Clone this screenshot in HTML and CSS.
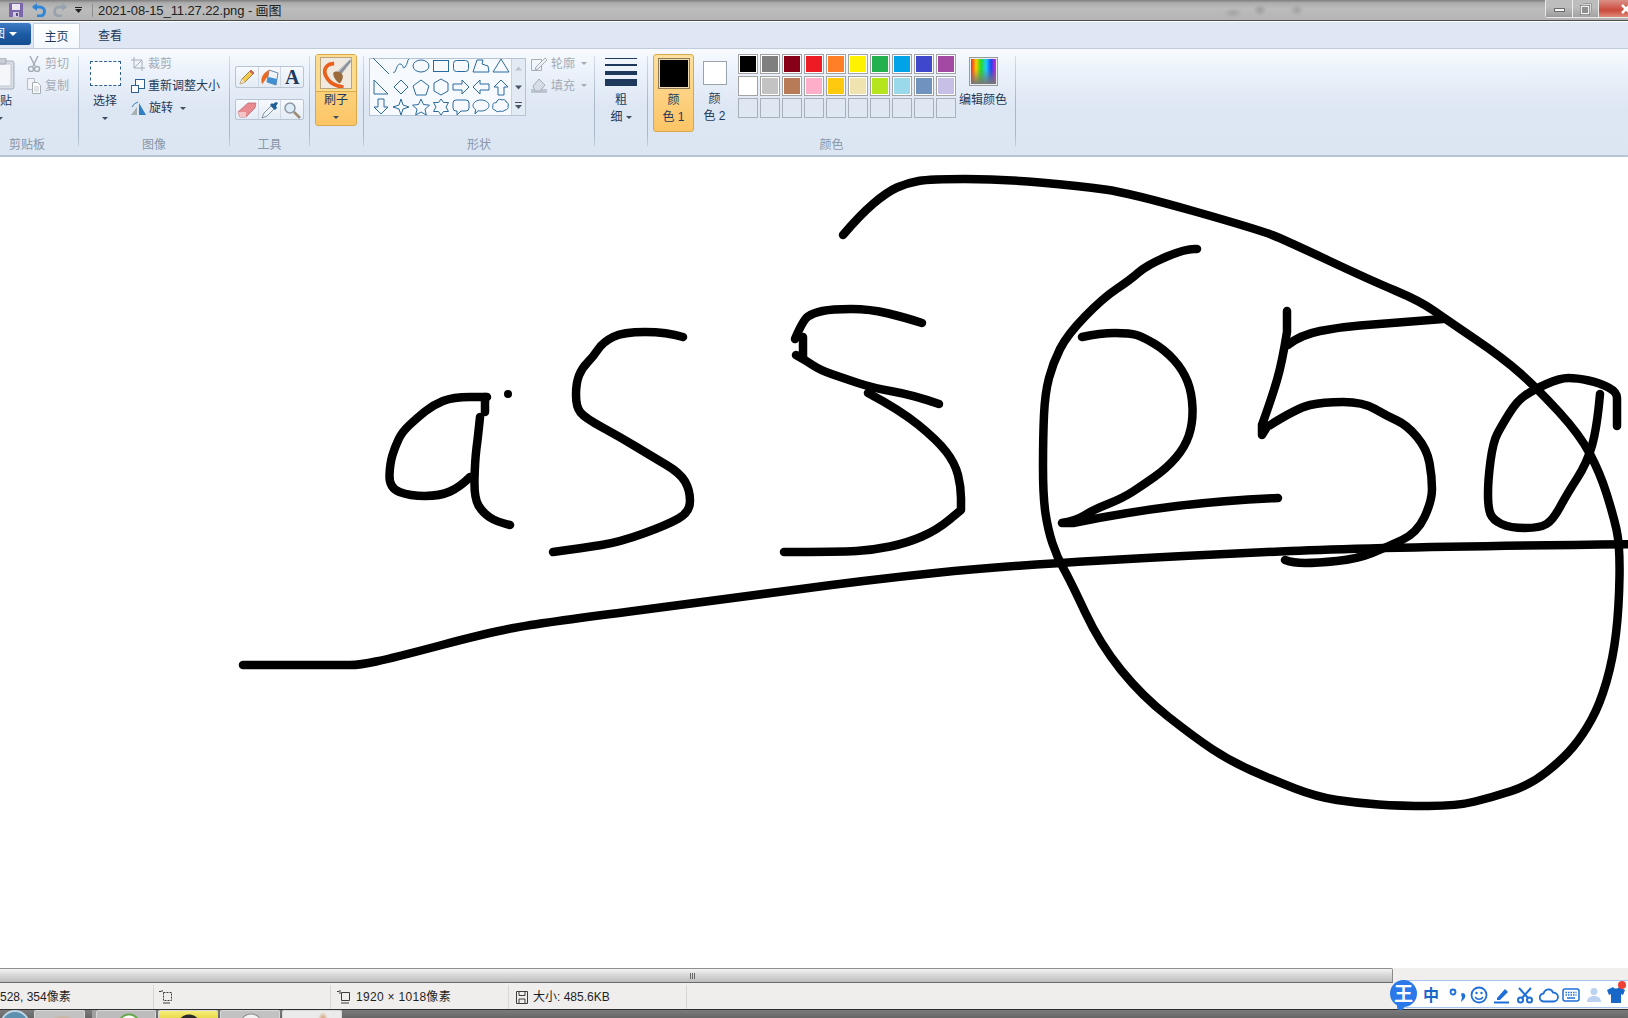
FILE: index.html
```html
<!DOCTYPE html>
<html lang="zh-CN">
<head>
<meta charset="utf-8">
<title>2021-08-15_11.27.22.png - 画图</title>
<link rel="stylesheet" href="styles.css">
</head>
<body>
<div class="app">
  <header class="titlebar">
    <svg class="qat save" viewBox="0 0 14 14"><path d="M0 0h14v14H0z" fill="#7a66a8"/><path d="M3 1h8v6H3z" fill="#e9e6f2"/><path d="M4 9h6v5H4z" fill="#cfc9e0"/><path d="M7 10h2v3H7z" fill="#5b4a8a"/></svg>
    <svg class="qat undo" viewBox="0 0 14 14"><path d="M1 4h7a4.500 4.500 0 0 1 0 9H5" fill="none" stroke="#2f86d6" stroke-width="3"/><path d="M5 0v8L0 4z" fill="#2f86d6"/></svg>
    <svg class="qat redo" viewBox="0 0 14 14"><path d="M13 4H6a4.500 4.500 0 0 0 0 9h3" fill="none" stroke="#9aa3ad" stroke-width="3"/><path d="M9 0v8l5-4z" fill="#9aa3ad"/></svg>
    <svg class="qat-drop" viewBox="0 0 7 6"><path d="M0 0h7v1H0zM0 2h7L3.500 6z" fill="#222"/></svg>
    <span class="title-sep"></span>
    <span class="title-text">2021-08-15_11.27.22.png - 画图</span>
    <div class="caption">
      <span class="cap cap-min"><i></i></span>
      <span class="cap cap-max"><svg width="12" height="12" viewBox="0 0 12 12"><path d="M3 .5h8.500V9" fill="none" stroke="#f1f1f1" stroke-width="2"/><path d="M3 .5h8.500V9" fill="none" stroke="#5f5f5f" stroke-width=".6"/><rect x="1" y="3" width="8" height="8" fill="#8f8f8f" stroke="#f1f1f1" stroke-width="2"/><rect x=".3" y="2.300" width="9.400" height="9.400" fill="none" stroke="#5f5f5f" stroke-width=".6"/></svg></span>
      <span class="cap cap-close"><svg viewBox="0 0 10 10"><path d="M1 1l8 8M9 1l-8 8" stroke="#fff" stroke-width="2.500"/></svg></span>
    </div>
  </header>

  <nav class="tabs">
    <div class="filebtn"><span>画图</span><b></b></div>
    <div class="tab active">主页</div>
    <div class="tab">查看</div>
  </nav>

  <section class="ribbon">
    <div class="group g-clip">
      <div class="body">
        <div class="big paste">
          <div class="slot"><svg width="30" height="32" viewBox="0 0 30 32"><rect x="1" y="3" width="28" height="28" rx="2" fill="#d9dee6" stroke="#a3adba"/><rect x="4" y="6" width="22" height="22" fill="#f4f6f9" stroke="#c4cad3"/><rect x="9" y="0" width="12" height="6" rx="1" fill="#c9ced6" stroke="#9fa8b3"/></svg></div>
          <span class="lbl">粘贴</span>
          <i class="caret"></i>
        </div>
        <div class="small-col">
          <div class="row dis"><svg width="14" height="16" viewBox="0 0 14 16"><path d="M3 0l5 10M11 0L6 10" stroke="#a8aeb6" stroke-width="1.500" fill="none"/><circle cx="4" cy="13" r="2.500" fill="none" stroke="#a8aeb6" stroke-width="1.500"/><circle cx="10" cy="13" r="2.500" fill="none" stroke="#a8aeb6" stroke-width="1.500"/></svg><span>剪切</span></div>
          <div class="row dis"><svg width="14" height="16" viewBox="0 0 14 16"><path d="M.5.500h7v11h-7z" fill="#f2f4f7" stroke="#b6bcc4"/><path d="M5.500 4.500h5l3 3v8h-8z" fill="#fff" stroke="#a8aeb6"/><path d="M7 9h5M7 11h5M7 13h5" stroke="#c4c9d0"/></svg><span>复制</span></div>
        </div>
      </div>
      <div class="glabel">剪贴板</div>
    </div>
    <span class="sep"></span>

    <div class="group g-image">
      <div class="body">
        <div class="big select">
          <div class="slot"><span class="dashed"></span></div>
          <span class="lbl">选择</span>
          <i class="caret"></i>
        </div>
        <div class="small-col">
          <div class="row dis"><svg width="14" height="14" viewBox="0 0 14 14"><path d="M3 0v11h11M0 3h11v11" fill="none" stroke="#a8aeb6"/><path d="M3 11l8-8" stroke="#a8aeb6"/></svg><span>裁剪</span></div>
          <div class="row"><svg width="14" height="14" viewBox="0 0 14 14"><rect x="4.500" y=".5" width="9" height="9" fill="#fff" stroke="#2c5f92"/><rect x=".5" y="6.500" width="7" height="7" fill="#fff" stroke="#2c5f92"/></svg><span>重新调整大小</span></div>
          <div class="row"><svg width="15" height="14" viewBox="0 0 15 14"><path d="M0 14L6 6v8z" fill="#a9aeb4"/><path d="M8 2l7 12H8z" fill="#2f7fc2"/><path d="M1 6q2-4 6-5" fill="none" stroke="#2f7fc2"/></svg><span>旋转</span><i class="caret caret-row"></i></div>
        </div>
      </div>
      <div class="glabel">图像</div>
    </div>
    <span class="sep"></span>

    <div class="group g-tools">
      <div class="body tools-body">
        <div class="toolbox">
          <span class="tool"><svg width="18" height="18" viewBox="0 0 18 18"><path d="M2 16l2-5L13 2l3 3-9 9z" fill="#f2c94f" stroke="#8b6d2a" stroke-width=".8"/><path d="M13 2l3 3-1.500 1.500-3-3z" fill="#d9625b"/><path d="M2 16l2-5 3 3z" fill="#f1dfc0"/></svg></span>
          <span class="tool"><svg width="20" height="18" viewBox="0 0 20 18"><path d="M9 2l9 3-2 12-9-3z" fill="#eef3f8" stroke="#6f8cab"/><path d="M8.500 9l8.500 2-1 6-9-3z" fill="#3f8fd2"/><path d="M9 2C3 5 0 10 2 16c2-1 3-5 6-7z" fill="#ea6a24"/></svg></span>
          <span class="tool"><span class="glyph-a">A</span></span>
        </div>
        <div class="toolbox second">
          <span class="tool"><svg width="20" height="16" viewBox="0 0 20 16"><path d="M1 10L11 1h8l-1 5-9 9H3z" fill="#ea8b92" stroke="#b56169" stroke-width=".7"/><path d="M1 10h8v5H3z" fill="#f3c3c6"/></svg></span>
          <span class="tool"><svg width="18" height="18" viewBox="0 0 18 18"><path d="M1 17l2-5 7-7 3 3-7 7z" fill="#eef3f8" stroke="#6a7d90" stroke-width=".8"/><path d="M9 4l5 5 2-2-1-2 2-3-2-1-3 2-1-1z" fill="#1f5f98"/></svg></span>
          <span class="tool"><svg width="18" height="18" viewBox="0 0 18 18"><circle cx="7" cy="7" r="5" fill="#dcecf7" stroke="#8d97a3" stroke-width="1.500"/><path d="M11 11l6 6" stroke="#9c8a72" stroke-width="2.500"/></svg></span>
        </div>
      </div>
      <div class="glabel">工具</div>
    </div>
    <span class="sep"></span>

    <div class="group g-brush">
      <div class="body">
        <div class="brushbtn">
          <div class="brushicon"><svg width="32" height="32" viewBox="0 0 32 32"><rect width="32" height="32" fill="#efe9df"/><path d="M14 6C6 6 2 12 5 19s10 11 19 12" fill="none" stroke="#e8601c" stroke-width="4"/><path d="M31 1l1 3-11 14-4-3z" fill="#8b929b"/><path d="M31 1L18 15" stroke="#dfe2e6"/><path d="M13 16c3-3 8-1 10 2 1 3-1 7-3 9-3-1-7-6-7-11z" fill="#9b6a3b"/></svg></div>
          <span class="lbl">刷子</span>
          <i class="caret"></i>
        </div>
      </div>
      <div class="glabel">&nbsp;</div>
    </div>
    <span class="sep"></span>

    <div class="group g-shapes">
      <div class="body">
        <div class="gallery">
          <div class="shapes">
            <svg viewBox="0 0 18 18"><path d="M1 1l16 16"/></svg>
            <svg viewBox="0 0 18 18"><path d="M1 15c3 3 3-8 7-8s2 6 5 3 2-7 4-8"/></svg>
            <svg viewBox="0 0 18 18"><ellipse cx="9" cy="9" rx="8" ry="6"/></svg>
            <svg viewBox="0 0 18 18"><rect x="1.500" y="3.500" width="15" height="11"/></svg>
            <svg viewBox="0 0 18 18"><rect x="1.500" y="3.500" width="15" height="11" rx="3"/></svg>
            <svg viewBox="0 0 18 18"><path d="M1 15L5 3h6l-1 4 6 2 1 6z"/></svg>
            <svg viewBox="0 0 18 18"><path d="M9 2l8 13H1z"/></svg>
            <svg viewBox="0 0 18 18"><path d="M2 2v14h14z"/></svg>
            <svg viewBox="0 0 18 18"><path d="M9 2l7 7-7 7-7-7z"/></svg>
            <svg viewBox="0 0 18 18"><path d="M9 2l8 6-3 9H4L1 8z"/></svg>
            <svg viewBox="0 0 18 18"><path d="M9 1l7 4v8l-7 4-7-4V5z"/></svg>
            <svg viewBox="0 0 18 18"><path d="M1 6h9V2l7 7-7 7v-4H1z"/></svg>
            <svg viewBox="0 0 18 18"><path d="M17 6H8V2L1 9l7 7v-4h9z"/></svg>
            <svg viewBox="0 0 18 18"><path d="M6 17V9H2l7-7 7 7h-4v8z"/></svg>
            <svg viewBox="0 0 18 18"><path d="M6 1v8H2l7 7 7-7h-4V1z"/></svg>
            <svg viewBox="0 0 18 18"><path d="M9 1l2 6 6 2-6 2-2 6-2-6-6-2 6-2z"/></svg>
            <svg viewBox="0 0 18 18"><path d="M9 1l2.500 5.500 6 .7-4.500 4 1.300 5.800L9 14l-5.300 3L5 11.200l-4.500-4 6-.7z"/></svg>
            <svg viewBox="0 0 18 18"><path d="M9 1l2.500 3.500h5L14 9l2.500 4.500h-5L9 17l-2.500-3.500h-5L4 9 1.500 4.500h5z"/></svg>
            <svg viewBox="0 0 18 18"><path d="M4 2h10a3 3 0 0 1 3 3v5a3 3 0 0 1-3 3H9l-4 4v-4H4a3 3 0 0 1-3-3V5a3 3 0 0 1 3-3z"/></svg>
            <svg viewBox="0 0 18 18"><path d="M9 2c4.500 0 8 2.500 8 5.500S13.500 13 9 13c-1 0-2 0-3-.3L3 16l.6-4.500C2 10.500 1 9 1 7.500 1 4.500 4.500 2 9 2z"/></svg>
            <svg viewBox="0 0 18 18"><path d="M5 3c1-2 4-2 5-1 2-1 4 0 4 2 2 0 3 3 2 4 1 2-1 4-3 4-1 1-3 2-5 1-1 1-4 1-5-1-2 0-3-2-2-4-1-2 1-4 3-3z"/></svg>
          </div>
          <div class="gal-scroll">
            <span class="gs"><svg viewBox="0 0 7 4"><path d="M0 4l3.500-4L7 4z" fill="#bcc4ce"/></svg></span>
            <span class="gs"><svg viewBox="0 0 7 4"><path d="M0 0l3.500 4L7 0z" fill="#4a5563"/></svg></span>
            <span class="gs"><svg viewBox="0 0 7 7"><path d="M0 0h7v1H0zM0 3h7L3.500 7z" fill="#4a5563"/></svg></span>
          </div>
        </div>
        <div class="small-col outline-col">
          <div class="row dis"><svg width="16" height="14" viewBox="0 0 16 14"><path d="M.5 2.500h10v11H.5z" fill="none" stroke="#a8aeb6"/><path d="M5 10l9-9 2 2-9 9-3 1z" fill="#eef1f4" stroke="#a8aeb6"/></svg><span>轮廓</span><i class="caret caret-row dis-caret"></i></div>
          <div class="row dis"><svg width="16" height="15" viewBox="0 0 16 15"><path d="M0 11h16v4H0z" fill="#bcc6d2"/><path d="M8 1l6 6-5 6H4L2 8z" fill="#d6dde6" stroke="#a8aeb6"/></svg><span>填充</span><i class="caret caret-row dis-caret"></i></div>
        </div>
      </div>
      <div class="glabel">形状</div>
    </div>
    <span class="sep"></span>

    <div class="group g-size">
      <div class="body">
        <div class="big sizebtn">
          <div class="sizes"><i class="s1"></i><i class="s2"></i><i class="s3"></i><i class="s4"></i></div>
          <span class="lbl">粗</span>
          <span class="lbl">细<i class="caret caret-row"></i></span>
        </div>
      </div>
      <div class="glabel">&nbsp;</div>
    </div>
    <span class="sep"></span>

    <div class="group g-colors">
      <div class="body">
        <div class="colorbtn c1">
          <span class="cswatch black"></span>
          <span class="lbl">颜</span>
          <span class="lbl">色 1</span>
        </div>
        <div class="colorbtn c2">
          <span class="cswatch white"></span>
          <span class="lbl">颜</span>
          <span class="lbl">色 2</span>
        </div>
        <div class="palette">
          <i class="c-000"></i><i class="c-7f7"></i><i class="c-880"></i><i class="c-ed1"></i><i class="c-ff7"></i><i class="c-fff2"></i><i class="c-22b"></i><i class="c-00a"></i><i class="c-3f4"></i><i class="c-a34"></i>
          <i class="c-fff"></i><i class="c-c3c"></i><i class="c-b97"></i><i class="c-ffa"></i><i class="c-ffc"></i><i class="c-efe"></i><i class="c-b5e"></i><i class="c-99d"></i><i class="c-709"></i><i class="c-c8b"></i>
          <i></i><i></i><i></i><i></i><i></i><i></i><i></i><i></i><i></i><i></i>
        </div>
        <div class="big editcolor">
          <div class="slot"><span class="rainbow"></span></div>
          <span class="lbl">编辑颜色</span>
        </div>
      </div>
      <div class="glabel">颜色</div>
    </div>
    <span class="sep"></span>
  </section>

  <main class="canvas">
    <svg class="drawing" viewBox="0 157 1628 811" width="1628" height="811">
      <g class="ink">
        <path d="M487,397 L470,397 Q453,397 443,401 Q433,405 425,411.500 Q417,418 409.500,425 Q402,432 398.500,439.500 Q395,447 392.500,455 Q390,463 389.500,475 Q389,488 399.500,492 Q410,496 425,496 Q440,496 450,491.500 Q460,487 470,477"/>
        <path d="M485,397 L485,412"/>
        <path d="M480,417 Q478,437 476.500,448 Q475,460 474.500,479 Q474,498 478.500,505.500 Q483,513 490,517.500 Q497,522 510,525"/>
        <path d="M683,337 Q667,332 645,332 Q623,332 613,337 Q603,342 598,349.500 Q593,357 587.500,362.500 Q582,368 579,375.500 Q576,383 576,395 Q576,407 580.500,412.500 Q585,418 602.500,427.500 Q620,437 636.500,447 Q653,457 666.500,465 Q680,473 685,481.500 Q690,490 690,501 Q690,512 678.500,518.500 Q667,525 643.500,533.500 Q620,542 601.500,545 Q583,548 553,552"/>
        <path d="M243,665 L350,665 Q360,665 376,661.500 Q393,658 440,645.500 Q487,633 513.500,628 Q540,623 630,611.500 Q720,600 793.500,590 Q867,580 935,573 Q1003,566 1101.500,560.500 Q1200,555 1290.500,551 Q1381,547 1640,544"/>
        <path d="M843,235 Q860,215 873.500,203.500 Q887,192 897,187.500 Q907,183 918.500,181 Q930,179 965,179 Q1000,179 1040,182.500 Q1080,186 1105,189.500 Q1130,193 1195,211.500 Q1260,230 1273.500,235.500 Q1287,241 1328.500,260.500 Q1370,280 1395,290.500 Q1420,301 1433.500,310.500 Q1447,320 1475,339 Q1503,358 1520.500,373.500 Q1538,389 1559,412 Q1580,435 1590,454 Q1600,473 1606.500,493.500 Q1613,514 1616.500,529.500 Q1620,545 1619.500,576.500 Q1619,608 1616,633.500 Q1613,659 1606.500,681.500 Q1600,704 1591.500,719.500 Q1583,735 1573,747 Q1563,759 1546.500,772 Q1530,785 1511.500,791 Q1493,797 1475,801.500 Q1457,806 1428.500,806 Q1400,806 1378.500,804.500 Q1357,803 1337,800 Q1317,797 1295,788.500 Q1273,780 1251.500,770.500 Q1230,761 1212,749 Q1194,737 1168,716.500 Q1142,696 1121,670 Q1100,644 1085,612 Q1070,580 1063.500,568.500 Q1057,557 1052.500,543.500 Q1048,530 1045.500,513.500 Q1043,497 1043,467 Q1043,437 1044,415 Q1045,393 1049,378 Q1053,363 1060,349 Q1067,335 1085,316.500 Q1103,298 1116.500,289 Q1130,280 1138.500,272.500 Q1147,265 1167,256.500 Q1187,248 1197,249"/>
        <path d="M1082,337 Q1100,333 1115,333 Q1130,333 1136.500,335 Q1143,337 1154,343.500 Q1165,350 1174,360 Q1183,370 1187.500,381.500 Q1192,393 1192.500,408 Q1193,423 1189,435 Q1185,447 1176,457.500 Q1167,468 1155,476.500 Q1143,485 1133,491.500 Q1123,498 1108,504 Q1093,510 1085,515 Q1077,520 1062,523 L1073,523 Q1127,512 1177,506 Q1227,500 1278,498"/>
        <path d="M922,323 Q907,318 888.500,313.500 Q870,309 851,309 Q832,309 822.500,311 Q813,313 808,316.500 Q803,320 795,339"/>
        <path d="M803,337 L803,357"/>
        <path d="M796,355 Q805,360 812.500,365 Q820,370 831.500,374 Q843,378 858,383 Q873,388 893,391.500 Q913,395 939,404"/>
        <path d="M868,393 Q900,410 918.500,425 Q937,440 946,451.500 Q955,463 958,475 Q961,487 961,498 L961,510 L949,520 Q937,530 922,536.500 Q907,543 890,546.500 Q873,550 856.500,551 Q840,552 784,552"/>
        <path d="M1287,311 L1287,332 Q1282,363 1277,380 Q1272,397 1262,425 L1262,435 L1267,427 Q1297,408 1310,405 Q1323,402 1343,402 Q1363,402 1375,409 Q1387,416 1397,420.500 Q1407,425 1417,437 Q1427,449 1429.500,463 Q1432,477 1432,489 Q1432,501 1424.500,517 Q1417,533 1402,540 Q1387,547 1372,553 Q1357,559 1337,561 Q1317,563 1305,563 Q1293,563 1285,560"/>
        <path d="M1288,345 Q1300,335 1320,331 Q1340,327 1360,325.500 Q1380,324 1443,319"/>
        <path d="M1617,426 L1617,398 Q1617,392 1608.500,387.500 Q1600,383 1588.500,380.500 Q1577,378 1568.500,378 Q1560,378 1546.500,384 Q1533,390 1525,395.500 Q1517,401 1509.500,413 Q1502,425 1497.500,433.500 Q1493,442 1490.500,461 Q1488,480 1488,494 Q1488,508 1490.500,514 Q1493,520 1501.500,524 Q1510,528 1525,528 Q1540,528 1546.500,524 Q1553,520 1560,507 Q1567,494 1577,478.500 Q1587,463 1592,445.500 Q1597,428 1600,394"/>
      </g>
      <circle cx="508" cy="394" r="4"/>
    </svg>
  </main>

  <div class="hscroll">
    <div class="track"><span class="grip"></span></div>
    <div class="track-rest"></div>
  </div>

  <footer class="status">
    <div class="cell c-a"><span>528, 354像素</span></div>
    <div class="cell c-b"><svg width="13" height="14" viewBox="0 0 13 14"><path d="M3 0v3M0 1.500h2M4.500 2.500h8v8h-8z" fill="none" stroke="#3c3c3c" stroke-dasharray="2 1"/><path d="M4 13h7" stroke="#3c3c3c"/></svg></div>
    <div class="cell c-c"><svg width="13" height="14" viewBox="0 0 13 14"><path d="M3 0v4M0 1.500h2M4.500 2.500h8v8h-8z" fill="none" stroke="#3c3c3c"/><path d="M4 13h8" stroke="#3c3c3c"/></svg><span>1920 × 1018像素</span></div>
    <div class="cell c-d"><svg width="12" height="13" viewBox="0 0 12 13"><path d="M.5.500h11v12H.5zM3 .5v4h6v-4M3 12.500V8h6v4.500" fill="none" stroke="#3c3c3c"/></svg><span>大小: 485.6KB</span></div>
    <div class="cell c-e"></div>
  </footer>

  <div class="taskbar">
    <span class="orb"></span>
    <span class="tile t1"></span>
    <span class="tgrip"></span>
    <span class="tile t2"></span>
    <span class="tile t3"></span>
    <span class="tile t4"></span>
    <span class="tile t5"></span>
  </div>

  <div class="ime">
    <span class="ime-logo">王</span>
    <span class="ime-zh">中</span>
    <span class="ime-ic"><svg width="20" height="18" viewBox="0 0 20 18"><circle cx="5" cy="6" r="2.500" fill="none" stroke="#1f6fd6" stroke-width="1.800"/><path d="M14 7c4 0 4 4 2 6l-3 3 1-5c-1-1-1-4 0-4z" fill="#1f6fd6"/></svg></span>
    <span class="ime-ic"><svg width="18" height="18" viewBox="0 0 18 18"><circle cx="9" cy="9" r="7.500" fill="none" stroke="#1f6fd6" stroke-width="1.800"/><circle cx="6.500" cy="7" r="1.200" fill="#1f6fd6"/><circle cx="11.500" cy="7" r="1.200" fill="#1f6fd6"/><path d="M5 11c2 3 6 3 8 0" fill="none" stroke="#1f6fd6" stroke-width="1.500"/></svg></span>
    <span class="ime-ic"><svg width="18" height="18" viewBox="0 0 18 18"><path d="M4 12L12 3l3 3-8 8H4z" fill="#1f6fd6"/><path d="M1 16.500h15" stroke="#1f6fd6" stroke-width="2"/></svg></span>
    <span class="ime-ic"><svg width="18" height="18" viewBox="0 0 18 18"><path d="M3 2l9 10M15 2L6 12" stroke="#1f6fd6" stroke-width="2"/><circle cx="4.500" cy="14" r="2.500" fill="none" stroke="#1f6fd6" stroke-width="2"/><circle cx="13.500" cy="14" r="2.500" fill="none" stroke="#1f6fd6" stroke-width="2"/></svg></span>
    <span class="ime-ic"><svg width="20" height="16" viewBox="0 0 20 16"><path d="M5 14.500a4 4 0 0 1-.5-8C6 2 12 .5 14 5.500c3 0 5 2 5 4.500s-2 4.500-4.500 4.500z" fill="none" stroke="#1f6fd6" stroke-width="1.800"/></svg></span>
    <span class="ime-ic"><svg width="18" height="14" viewBox="0 0 18 14"><rect x="1" y="1" width="16" height="12" rx="2" fill="none" stroke="#1f6fd6" stroke-width="1.500"/><path d="M3.500 4.500h11M3.500 7h11" stroke="#1f6fd6" stroke-width="1.500" stroke-dasharray="1.500 1"/><path d="M5 10h8" stroke="#1f6fd6" stroke-width="1.500"/></svg></span>
    <span class="ime-ic"><svg width="16" height="16" viewBox="0 0 16 16"><circle cx="8" cy="4.500" r="3.500" fill="#bcd2f2"/><path d="M1 15c0-4 3-6 7-6s7 2 7 6z" fill="#bcd2f2"/></svg></span>
    <span class="ime-ic"><svg width="18" height="16" viewBox="0 0 18 16"><path d="M6 0L0 3l2 5 2-1v9h10V7l2 1 2-5-6-3c-1 2-5 2-6 0z" fill="#1767c9"/></svg></span>
    <span class="ime-dot"></span>
  </div>
</div>
</body>
</html>
```
FILE: styles.css
```css
* { box-sizing: border-box; }
html, body { margin: 0; padding: 0; background: #fff; }
body {
  width: 1628px;
  height: 1018px;
  overflow: hidden;
  font: 12px/16px "Liberation Sans", "Noto Sans CJK SC", sans-serif;
  color: #1e395b;
}
.app { position: relative; width: 1628px; height: 1018px; overflow: hidden; display: flex; flex-direction: column; }

/* title bar */
.titlebar {
  position: relative;
  height: 21px;
  flex: none;
  display: flex;
  align-items: center;
  background:
    radial-gradient(ellipse 10px 5px at 1233px 13px, #a3a3a3, transparent),
    radial-gradient(ellipse 7px 6px at 1260px 10px, #9d9d9d, transparent),
    radial-gradient(ellipse 7px 6px at 1297px 10px, #a1a1a1, transparent),
    linear-gradient(#7e7e7e 0, #adadad 3px, #bcbcbc 9px, #b4b4b4 20px);
  border-bottom: 1px solid #4c4c4c;
  padding-left: 9px;
}
.qat { width: 14px; height: 14px; flex: none; }
.undo { margin-left: 9px; }
.redo { margin-left: 7px; }
.qat-drop { width: 7px; height: 6px; margin-left: 8px; flex: none; }
.title-sep { width: 1px; height: 13px; background: #8d8d8d; margin: 0 5px 0 10px; }
.title-text { font-size: 13px; letter-spacing: -.1px; color: #222; white-space: nowrap; padding-top: 1px; }
.caption { margin-left: auto; align-self: flex-start; display: flex; height: 18px; border: 1px solid #e9e9e9; border-top: 0; border-radius: 0 0 0 3px; border-right: 0; }
.cap { display: flex; align-items: center; justify-content: center; border-right: 1px solid #ececec; overflow: hidden; }
.cap-min { width: 27px; background: linear-gradient(#bdbdbd 40%, #9b9b9b); }
.cap-min i { width: 11px; height: 4px; background: #f6f6f6; border: 1px solid #6b6b6b; margin-top: 2px; }
.cap-max { width: 26px; background: linear-gradient(#bdbdbd 40%, #a2a2a2); }
.cap-close { width: 29px; border-right: 0; justify-content: flex-end; background: linear-gradient(#dc9088 0, #cb4a3c 60%, #e08b79); }
.cap-close svg { width: 10px; height: 10px; margin-right: -3px; }

/* tabs */
.tabs { height: 27px; flex: none; background: #dee7f3; border-top: 1px solid #fff; display: flex; align-items: flex-end; position: relative; }
.filebtn {
  align-self: flex-start;
  margin-top: 1px;
  width: 31px;
  height: 22px;
  background: linear-gradient(#3d7cc4, #1b5aa3 55%, #164d90);
  border-radius: 0 3px 3px 0;
  display: flex;
  align-items: center;
  justify-content: flex-end;
  color: #fff;
  overflow: hidden;
  padding-right: 14px;
  gap: 4px;
}
.filebtn span { white-space: nowrap; }
.filebtn b { width: 0; height: 0; border: 4px solid transparent; border-top: 4px solid #fff; border-bottom: 0; flex: none; }
.tab { width: 47px; height: 25px; line-height: 26px; text-align: center; margin-right: 0; }
.tab.active { margin-left: 2px; background: linear-gradient(#fff, #f3f8fe); border: 1px solid #c4d0de; border-bottom: 0; border-radius: 2px 2px 0 0; margin-right: 0; }
.tab:not(.active) { margin-left: 6px; width: 48px; }

/* ribbon */
.ribbon {
  height: 109px;
  flex: none;
  display: flex;
  align-items: flex-start;
  padding-top: 5px;
  background: linear-gradient(#f7fbff 0, #eaf1fa 25px, #dde6f3 60px, #dce6f3 100%);
  border-top: 1px solid #c0ccda;
  border-bottom: 2px solid #b8c4d2;
  overflow: hidden;
}
.group { flex: none; display: flex; flex-direction: column; overflow: hidden; }
.body { height: 84px; display: flex; }
.glabel { height: 16px; line-height: 15px; text-align: center; color: #8996a8; white-space: nowrap; }
.sep { flex: none; width: 1px; height: 90px; margin-top: 2px; background: linear-gradient(#d4deea, #a9b7c7 50%, #a9b7c7 85%, #c4cfdc); }
.g-clip { width: 78px; }
.g-clip .glabel { text-align: left; padding-left: 9px; }
.g-image { width: 150px; }
.g-tools { width: 79px; }
.g-brush { width: 53px; }
.g-shapes { width: 230px; }
.g-size { width: 52px; }
.g-colors { width: 367px; }

.big { display: flex; flex-direction: column; align-items: center; flex: none; }
.slot { height: 39px; display: flex; align-items: center; justify-content: center; }
.lbl { display: block; height: 17px; line-height: 17px; white-space: nowrap; }
.caret { display: block; width: 0; height: 0; border: 3px solid transparent; border-top: 3px solid #3f4f63; border-bottom: 0; margin-top: 7px; }
.caret-row { margin: 0 0 0 4px; align-self: center; flex: none; display: inline-block; vertical-align: middle; }
.dis { color: #a4abb4; }
.dis-caret { border-top-color: #a4abb4; }

.small-col { display: flex; flex-direction: column; margin-top: -1px; }
.row { height: 22px; display: flex; align-items: center; white-space: nowrap; }
.row svg { flex: none; }

.paste { width: 46px; margin-left: -23px; }
.g-clip .small-col { margin-left: 4px; }
.g-clip .row { gap: 4px; }
.select { width: 40px; margin-left: 6px; }
.dashed { width: 31px; height: 25px; border: 1px dashed #2c5f92; display: block; background: #fff; }
.g-image .small-col { margin-left: 6px; }
.g-image .row { gap: 3px; }

.tools-body { flex-direction: column; padding: 12px 0 0 5px; gap: 11px; }
.toolbox { width: 69px; height: 22px; display: flex; background: linear-gradient(#f7fafd, #e3ebf5); border: 1px solid #b9c5d3; border-radius: 2px; }
.toolbox.second { height: 21px; }
.tool { flex: 1; display: flex; align-items: center; justify-content: center; border-right: 1px solid #cfd8e3; }
.tool:last-child { border-right: 0; }
.glyph-a { font: bold 20px/20px "Liberation Serif", serif; color: #1e395b; }

.brushbtn { margin-left: 5px; width: 42px; height: 72px; display: flex; flex-direction: column; align-items: center; border: 1px solid #d9a84a; border-radius: 3px; background: linear-gradient(#fde9a8, #fbd57f 40%, #fcc566); }
.brushicon { width: 40px; height: 37px; display: flex; align-items: center; justify-content: center; border-bottom: 1px solid #d9a84a; background: #fbdc8f; }
.brushicon svg { border: 1px solid #b9a67f; }

.gallery { width: 157px; height: 58px; margin: 4px 0 0 5px; display: flex; border: 1px solid #b5c3d3; background: #f6fafe; }
.shapes { width: 141px; height: 60px; margin-top: -3px; display: grid; grid-template-columns: repeat(7, 20px); grid-auto-rows: 20.500px; padding: 0 0 0 1px; justify-items: center; align-items: center; }
.shapes svg { width: 18px; height: 18px; fill: none; stroke: #2a6a9e; stroke-width: 1; }
.gal-scroll { flex: 1; display: flex; flex-direction: column; background: #e2eaf4; border-left: 1px solid #c6d2df; }
.gs { flex: 1; display: flex; align-items: center; justify-content: center; }
.gs svg { width: 7px; height: 7px; }
.outline-col { margin: -2px 0 0 5px; }
.g-shapes .row { gap: 4px; height: 21px; margin-top: 1px; }
.g-shapes .caret-row { margin-left: 2px; }

.sizebtn { width: 52px; padding-top: 4px; }
.sizes { width: 32px; height: 34px; display: flex; flex-direction: column; }
.sizes i { display: block; background: #1e395b; width: 100%; }
.s1 { height: 1px; }
.s2 { height: 2px; margin-top: 5px; }
.s3 { height: 4px; margin-top: 5px; }
.s4 { height: 7px; margin-top: 4px; }
.sizebtn .lbl .caret-row { margin-left: 3px; }

.colorbtn { display: flex; flex-direction: column; align-items: center; flex: none; }
.c1 { width: 41px; height: 78px; margin-left: 5px; border: 1px solid #d9a84a; border-radius: 3px; background: linear-gradient(#fde0a0, #fcc566); padding-top: 3px; }
.c2 { width: 35px; margin-left: 3px; padding-top: 7px; }
.cswatch { display: block; flex: none; }
.black { width: 32px; height: 31px; background: #000; border: 2px solid #f0dcae; outline: 1px solid #8d7a58; outline-offset: -1px; margin-bottom: 3px; }
.white { width: 24px; height: 24px; background: #fff; border: 1px solid #99a3ad; margin-bottom: 6px; }
.palette { margin: 0 0 0 6px; width: 218px; height: 64px; display: grid; grid-template-columns: repeat(10, 20px); grid-auto-rows: 20px; gap: 2px; flex: none; }
.palette i { display: block; border: 1px solid #a8b0ba; background: #dfe7f2; }
.palette i[class] { border: 1px solid #a3a3a3; outline: 1px solid #fff; outline-offset: -2px; }
.c-000 { background: #000 !important; }
.c-7f7 { background: #7f7f7f !important; }
.c-880 { background: #880015 !important; }
.c-ed1 { background: #ed1c24 !important; }
.c-ff7 { background: #ff7f27 !important; }
.c-fff2 { background: #fff200 !important; }
.c-22b { background: #22b14c !important; }
.c-00a { background: #00a2e8 !important; }
.c-3f4 { background: #3f48cc !important; }
.c-a34 { background: #a349a4 !important; }
.c-fff { background: #fff !important; }
.c-c3c { background: #c3c3c3 !important; }
.c-b97 { background: #b97a57 !important; }
.c-ffa { background: #ffaec9 !important; }
.c-ffc { background: #ffc90e !important; }
.c-efe { background: #efe4b0 !important; }
.c-b5e { background: #b5e61d !important; }
.c-99d { background: #99d9ea !important; }
.c-709 { background: #7092be !important; }
.c-c8b { background: #c8bfe7 !important; }
.editcolor { width: 50px; margin-left: 2px; }
.editcolor .slot { height: 38px; }
.rainbow { display: block; width: 29px; height: 29px; margin-top: -3px; border: 2px solid #e8edf3; outline: 1px solid #9a9a9a; outline-offset: -1px; background: linear-gradient(rgba(255,255,255,0) 40%, #777), linear-gradient(90deg, #f22, #fc0, #2d2, #2cf, #24e, #d2c); }

/* canvas */
.canvas { height: 811px; flex: none; background: #fff; overflow: hidden; }
.drawing { display: block; }
.ink path { fill: none; stroke: #000; stroke-width: 8.500; stroke-linecap: round; stroke-linejoin: round; }

/* scrollbar + status */
.hscroll { height: 16px; flex: none; display: flex; background: #f0efed; }
.track { width: 1393px; height: 15px; background: linear-gradient(#f3f3f3, #dcdcdc 40%, #bcbcbc); border-top: 1px solid #8f8f8f; border-right: 1px solid #8a8a8a; border-bottom: 1px solid #6a6a6a; border-radius: 0 2px 0 0; display: flex; align-items: center; padding-left: 690px; }
.grip { width: 5px; height: 6px; background: repeating-linear-gradient(90deg, #666 0 1px, transparent 1px 2px); }
.track-rest { flex: 1; }
.status { height: 26px; flex: none; display: flex; background: #f0eeec; border-bottom: 1px solid #2e2e2e; color: #1f1f1f; padding-top: 1px; }
.cell { display: flex; align-items: center; border-right: 1px solid #d9d7d4; white-space: nowrap; gap: 6px; padding-left: 6px; }
.c-a { width: 154px; padding-left: 0; }
.c-b { width: 177px; padding-left: 5px; }
.c-c { width: 178px; letter-spacing: .3px; }
.c-d { width: 178px; padding-left: 7px; gap: 5px; }
.c-e { flex: 1; border-right: 0; }

.taskbar { height: 8px; flex: none; display: flex; background: linear-gradient(#7b7b7b, #676767); overflow: hidden; }
.orb { width: 30px; height: 30px; flex: none; border-radius: 50%; background: #5d8fae; border: 2px solid #bcd4e3; }
.tile { height: 8px; width: 60px; flex: none; border: 1px solid #d8d8d8; border-bottom: 0; border-radius: 2px 2px 0 0; margin-left: 2px; }
.t1 { width: 51px; margin-left: 4px; background: radial-gradient(ellipse 12px 5px at 28px 9px, #c9a877, transparent), #c2c2c2; }
.tgrip { width: 4px; height: 8px; margin-left: 7px; background: #a0a0a0; flex: none; }
.t2 { margin-left: 0; background: radial-gradient(circle at 32px 14px, #fff 0 9px, #66a84a 10px 11px, transparent 12px), #bcbcbc; }
.t3 { background: radial-gradient(circle at 30px 15px, #2a2a2a 0 11px, transparent 12px), linear-gradient(#f7ee7a, #e8da4a); }
.t4 { background: radial-gradient(circle at 30px 14px, #f2f2f2 0 10px, #888 11px, transparent 12px), #c2c2c2; }
.t5 { background: radial-gradient(ellipse 5px 7px at 40px 8px, #cf9a66, transparent), #ebebeb; }

/* IME toolbar */
.ime { position: absolute; left: 1402px; top: 980px; width: 226px; height: 28px; background: #fff; border: 1px solid #a9c4ee; border-right: 0; display: flex; align-items: center; color: #1f6fd6; }
.ime-logo { position: absolute; left: -13px; top: -1px; width: 27px; height: 27px; border-radius: 50%; background: #2a78ea; color: #fff; font: bold 19px/26px "Noto Sans CJK SC", sans-serif; text-align: center; }
.ime-logo::after { content: ""; position: absolute; left: 7px; bottom: -3px; width: 7px; height: 6px; background: #2a78ea; border-radius: 0 0 4px 4px; }
.ime-zh { position: absolute; left: 20px; top: 3px; font: bold 16px/20px "Noto Sans CJK SC", sans-serif; color: #1767c9; }
.ime-ic { position: absolute; top: 4px; display: flex; width: 20px; height: 20px; align-items: center; justify-content: center; }
.ime-ic:nth-of-type(3) { left: 45px; }
.ime-ic:nth-of-type(4) { left: 66px; }
.ime-ic:nth-of-type(5) { left: 89px; }
.ime-ic:nth-of-type(6) { left: 112px; }
.ime-ic:nth-of-type(7) { left: 136px; }
.ime-ic:nth-of-type(8) { left: 158px; }
.ime-ic:nth-of-type(9) { left: 181px; }
.ime-ic:nth-of-type(10) { left: 203px; }
.ime-dot { position: absolute; left: 215px; top: 0; width: 8px; height: 8px; border-radius: 50%; background: #ee4035; }
```
